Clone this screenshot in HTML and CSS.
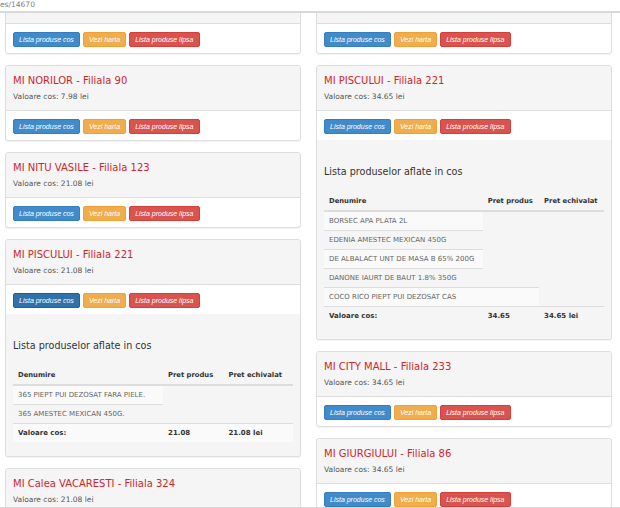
FILE: index.html
```html
<!DOCTYPE html>
<html lang="ro">
<head>
    <meta charset="UTF-8">
    <meta name="viewport" content="width=device-width, initial-scale=1.0">
    <title>Comenzi - Filiale</title>
    <link rel="stylesheet" href="styles.css">
</head>
<body>
    <div class="window">
        <div class="urlbar">es/14670</div>
        <div class="page">
            <div class="columns">
                <!-- Left column -->
                <div class="col">
                    <div class="card">
                        <div class="card-head">
                            <h4 class="store-name">MI BERCENI - Filiala 12</h4>
                            <div class="store-total">Valoare cos: 7.98 lei</div>
                        </div>
                        <div class="card-foot">
                            <button class="btn btn-blue">Lista produse cos</button>
                            <button class="btn btn-orange">Vezi harta</button>
                            <button class="btn btn-red">Lista produse lipsa</button>
                        </div>
                    </div>
                    <div class="card">
                        <div class="card-head">
                            <h4 class="store-name">MI NORILOR - Filiala 90</h4>
                            <div class="store-total">Valoare cos: 7.98 lei</div>
                        </div>
                        <div class="card-foot">
                            <button class="btn btn-blue">Lista produse cos</button>
                            <button class="btn btn-orange">Vezi harta</button>
                            <button class="btn btn-red">Lista produse lipsa</button>
                        </div>
                    </div>
                    <div class="card">
                        <div class="card-head">
                            <h4 class="store-name">MI NITU VASILE - Filiala 123</h4>
                            <div class="store-total">Valoare cos: 21.08 lei</div>
                        </div>
                        <div class="card-foot">
                            <button class="btn btn-blue">Lista produse cos</button>
                            <button class="btn btn-orange">Vezi harta</button>
                            <button class="btn btn-red">Lista produse lipsa</button>
                        </div>
                    </div>
                    <div class="card">
                        <div class="card-head">
                            <h4 class="store-name">MI PISCULUI - Filiala 221</h4>
                            <div class="store-total">Valoare cos: 21.08 lei</div>
                        </div>
                        <div class="card-foot">
                            <button class="btn btn-blue active">Lista produse cos</button>
                            <button class="btn btn-orange">Vezi harta</button>
                            <button class="btn btn-red">Lista produse lipsa</button>
                        </div>
                        <div class="cart">
                            <h3>Lista produselor aflate in cos</h3>
                            <table>
                                <thead>
                                    <tr><th>Denumire</th><th>Pret produs</th><th>Pret echivalat</th></tr>
                                </thead>
                                <tbody>
                                    <tr><td>365 PIEPT PUI DEZOSAT FARA PIELE.</td></tr>
                                    <tr><td>365 AMESTEC MEXICAN 450G.</td></tr>
                                    <tr class="total"><td>Valoare cos:</td><td>21.08</td><td>21.08 lei</td></tr>
                                </tbody>
                            </table>
                        </div>
                    </div>
                    <div class="card">
                        <div class="card-head">
                            <h4 class="store-name">MI Calea VACARESTI - Filiala 324</h4>
                            <div class="store-total">Valoare cos: 21.08 lei</div>
                        </div>
                        <div class="card-foot">
                            <button class="btn btn-blue">Lista produse cos</button>
                            <button class="btn btn-orange">Vezi harta</button>
                            <button class="btn btn-red">Lista produse lipsa</button>
                        </div>
                    </div>
                </div>
                <!-- Right column -->
                <div class="col">
                    <div class="card">
                        <div class="card-head">
                            <h4 class="store-name">MI TITAN - Filiala 45</h4>
                            <div class="store-total">Valoare cos: 34.65 lei</div>
                        </div>
                        <div class="card-foot">
                            <button class="btn btn-blue">Lista produse cos</button>
                            <button class="btn btn-orange">Vezi harta</button>
                            <button class="btn btn-red">Lista produse lipsa</button>
                        </div>
                    </div>
                    <div class="card">
                        <div class="card-head">
                            <h4 class="store-name">MI PISCULUI - Filiala 221</h4>
                            <div class="store-total">Valoare cos: 34.65 lei</div>
                        </div>
                        <div class="card-foot">
                            <button class="btn btn-blue">Lista produse cos</button>
                            <button class="btn btn-orange">Vezi harta</button>
                            <button class="btn btn-red">Lista produse lipsa</button>
                        </div>
                        <div class="cart">
                            <h3>Lista produselor aflate in cos</h3>
                            <table>
                                <thead>
                                    <tr><th>Denumire</th><th>Pret produs</th><th>Pret echivalat</th></tr>
                                </thead>
                                <tbody>
                                    <tr><td>BORSEC APA PLATA 2L</td></tr>
                                    <tr><td>EDENIA AMESTEC MEXICAN 450G</td></tr>
                                    <tr><td>DE ALBALACT UNT DE MASA B 65% 200G</td></tr>
                                    <tr><td>DANONE IAURT DE BAUT 1.8% 350G</td></tr>
                                    <tr><td>COCO RICO PIEPT PUI DEZOSAT CAS</td><td></td></tr>
                                    <tr class="total"><td>Valoare cos:</td><td>34.65</td><td>34.65 lei</td></tr>
                                </tbody>
                            </table>
                        </div>
                    </div>
                    <div class="card">
                        <div class="card-head">
                            <h4 class="store-name">MI CITY MALL - Filiala 233</h4>
                            <div class="store-total">Valoare cos: 34.65 lei</div>
                        </div>
                        <div class="card-foot">
                            <button class="btn btn-blue">Lista produse cos</button>
                            <button class="btn btn-orange">Vezi harta</button>
                            <button class="btn btn-red">Lista produse lipsa</button>
                        </div>
                    </div>
                    <div class="card">
                        <div class="card-head">
                            <h4 class="store-name">MI GIURGIULUI - Filiala 86</h4>
                            <div class="store-total">Valoare cos: 34.65 lei</div>
                        </div>
                        <div class="card-foot">
                            <button class="btn btn-blue">Lista produse cos</button>
                            <button class="btn btn-orange">Vezi harta</button>
                            <button class="btn btn-red">Lista produse lipsa</button>
                        </div>
                    </div>
                </div>
            </div>
        </div>
    </div>
</body>
</html>
```

FILE: styles.css
```css
/* General styles */
body {
    margin: 0;
    padding: 0;
    background-color: #fff;
    font-family: "DejaVu Sans", Verdana, sans-serif;
}
.window {
    height: 508px;
    box-sizing: border-box;
    display: flex;
    flex-direction: column;
    overflow: hidden;
    border-bottom: 1px solid #d8d8d8;
}
.urlbar {
    height: 11px;
    flex: none;
    border-bottom: 2px solid #d9d9d9;
    font-size: 7.5px;
    line-height: 9px;
    color: #808080;
    overflow: hidden;
}
.page {
    flex: 1;
    overflow: hidden;
}
.columns {
    display: flex;
    align-items: flex-start;
    gap: 15px;
    padding: 0 8px 0 5px;
    margin-top: -35px;
}
.col {
    width: 296px;
}
/* Store cards */
.card {
    background-color: #fff;
    border: 1px solid #ddd;
    border-radius: 3px;
    margin-bottom: 11px;
    box-shadow: 0 1px 1px rgba(0, 0, 0, 0.05);
}
.card-head {
    background-color: #f5f5f5;
    border-bottom: 1px solid #ddd;
    border-radius: 3px 3px 0 0;
    padding: 8px 7px 7px;
}
.store-name {
    margin: 0 0 3px;
    font-size: 10px;
    line-height: 14px;
    font-weight: normal;
    color: #d0262b;
}
.store-total {
    font-size: 7.5px;
    line-height: 12px;
    color: #555;
}
.card-foot {
    display: flex;
    gap: 3px;
    padding: 8px 7px 6px;
}
.btn {
    height: 15px;
    padding: 0 5px;
    border: 1px solid transparent;
    border-radius: 2px;
    font-family: "Liberation Sans", Arial, sans-serif;
    font-style: italic;
    font-size: 7px;
    line-height: 13px;
    color: #fff;
    cursor: pointer;
}
.btn-blue {
    background-color: #428bca;
    border-color: #357ebd;
}
.btn-blue.active {
    background-color: #3071a9;
    border-color: #285e8e;
}
.btn-orange {
    background-color: #f0ad4e;
    border-color: #eea236;
}
.btn-red {
    background-color: #d9534f;
    border-color: #d43f3a;
}
/* Cart list */
.cart {
    background-color: #f5f5f5;
    border-radius: 0 0 3px 3px;
    padding: 7px;
}
.cart h3 {
    margin: 18px 0 13px;
    font-size: 9.6px;
    line-height: 14px;
    font-weight: normal;
    color: #333;
}
.cart table {
    width: 100%;
    border-collapse: collapse;
    margin-bottom: 7px;
}
.cart th {
    padding: 4px 5px;
    border-bottom: 2px solid #ddd;
    text-align: left;
    vertical-align: bottom;
    font-size: 6.8px;
    line-height: 10px;
    font-weight: bold;
    color: #333;
}
.cart td {
    padding: 4px 5px;
    border-top: 1px solid #ddd;
    font-size: 7px;
    line-height: 10px;
    color: #666;
}
.cart tbody tr:nth-child(odd) td {
    background-color: #fafafa;
}
.cart tr.total td {
    font-weight: bold;
    color: #333;
}
```
